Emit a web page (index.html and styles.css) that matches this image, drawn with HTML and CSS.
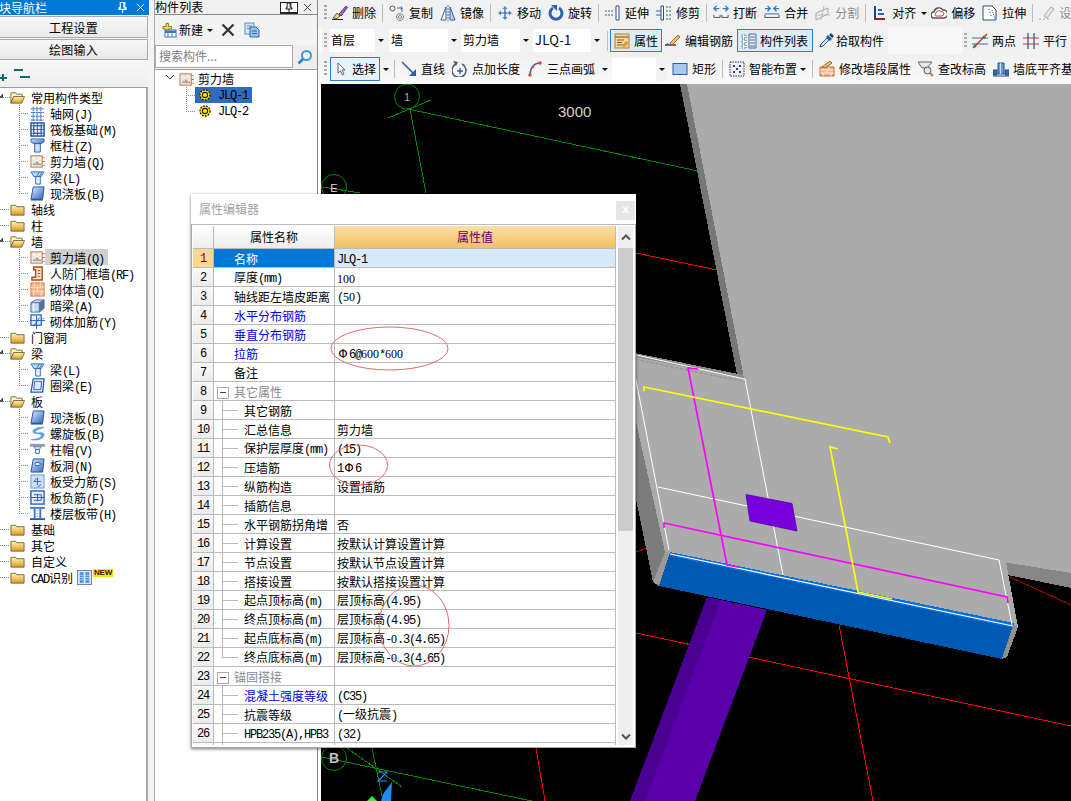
FILE: index.html
```html
<!DOCTYPE html>
<html lang="zh">
<head>
<meta charset="utf-8">
<title>属性编辑器</title>
<link rel="stylesheet" href="styles.css">
</head>
<body>
<svg class="defs" width="0" height="0">
<defs>
<linearGradient id="fy" x1="0" y1="0" x2="0" y2="1"><stop offset="0" stop-color="#fff4b8"/><stop offset="1" stop-color="#d99a1e"/></linearGradient>
<linearGradient id="bl" x1="0" y1="0" x2="1" y2="1"><stop offset="0" stop-color="#dfeaff"/><stop offset="1" stop-color="#2f68c0"/></linearGradient>
<symbol id="pin" viewBox="0 0 10 12"><path d="M2.500 0h5v6.500H9V8H1V6.500h1.500z" fill="none" stroke="currentColor" stroke-width="1.300"/><path d="M5 8v4M6.500 0v6" stroke="currentColor" stroke-width="1.300"/></symbol>
<symbol id="cls" viewBox="0 0 10 10"><path d="M1 1l8 8M9 1L1 9" stroke="currentColor" stroke-width="1"/></symbol>
<symbol id="fc" viewBox="0 0 16 16"><path d="M1 3.500h5l1 1.500h8v9H1z" fill="url(#fy)" stroke="#7a6a3a"/></symbol>
<symbol id="fo" viewBox="0 0 16 16"><path d="M1 3h5l1 1.500h6V7H4L1 14z" fill="#fff3c8" stroke="#7a6a3a"/><path d="M1 14l3-7h11.500l-3 7z" fill="url(#fy)" stroke="#7a6a3a"/></symbol>
<symbol id="grid" viewBox="0 0 16 16"><path d="M1 3h14M1 7h14M1 11h14M1 15h14M3.500 1v15M7.500 1v15M11.500 1v15" stroke="#2a5fb0" fill="none" stroke-dasharray="2 .6"/></symbol>
<symbol id="raft" viewBox="0 0 16 16"><rect x="1" y="1" width="14" height="14" fill="#e8eefc" stroke="#1e4f9c" stroke-width="1.500"/><path d="M4 4h8v8H4zM1 4h14M1 12h14M4 1v14M12 1v14M8 1v14M1 8h14" stroke="#1e4f9c" fill="none" stroke-width=".8"/></symbol>
<symbol id="col" viewBox="0 0 16 16"><path d="M1 1h14v3l-3 2H4L1 4z" fill="url(#bl)" stroke="#2c5ea8"/><path d="M5 6h6v9H5z" fill="#cfe0fa" stroke="#2c5ea8"/></symbol>
<symbol id="wall" viewBox="0 0 16 16"><rect x="1" y="2" width="12" height="12" fill="#f2f0ea" stroke="#c66b2e"/><path d="M3 12h9v-2H9V8H6v2H3z" fill="#a8a49c"/><path d="M4 9h1M7 6h1M10 7h1M3 7h1M6 4h1" stroke="#bbb"/><path d="M13 4h3M13 8h3M13 12h3" stroke="#d9782e"/></symbol>
<symbol id="beam" viewBox="0 0 16 16"><path d="M1 2h14l-3 5H4z" fill="#bcd6f6" stroke="#2c6cc0"/><path d="M6 7h5v8H6z" fill="#e5f0fd" stroke="#2c6cc0"/><path d="M10 2l-3 5M13 2l-3 5" stroke="#2c6cc0"/></symbol>
<symbol id="slab" viewBox="0 0 16 16"><path d="M3.500 1H15l-1.500 13H1z" fill="url(#bl)" stroke="#1e4f9c"/><path d="M1 14h12.500v1.500H1z" fill="#1e4f9c"/></symbol>
<symbol id="door" viewBox="0 0 16 16"><path d="M4 1h9v14H2v-3h4V4H4z" fill="#fbe3cf" stroke="#a8501e" stroke-width="1.500"/><path d="M8 5h3M8 8h3M8 11h3" stroke="#a8501e"/></symbol>
<symbol id="brick" viewBox="0 0 16 16"><rect x="1" y="1" width="14" height="14" fill="#f6b48a" stroke="#d9763a"/><path d="M1 5.500h14M1 10h14M5 1v4.500M11 1v4.500M8 5.500V10M4 10v5M12 10v5" stroke="#fbe6d6"/></symbol>
<symbol id="dbeam" viewBox="0 0 16 16"><path d="M1 5l5-3h9v9l-5 4H1z" fill="#c6d9f0" stroke="#3a6aa8"/><path d="M1 5h9v10M10 5l5-3" fill="none" stroke="#3a6aa8"/><path d="M10 5l5-3v9l-5 4z" fill="#55729c"/><path d="M4 5v10" stroke="#fff"/></symbol>
<symbol id="mrebar" viewBox="0 0 16 16"><rect x="1" y="1" width="11" height="11" fill="#e5efff" stroke="#1f5fc0" stroke-width="1.300"/><path d="M0 7h16M7 2v14M4 13l6-9" stroke="#1f5fc0" fill="none"/><path d="M12 5h4" stroke="#1f5fc0" stroke-dasharray="1 1"/></symbol>
<symbol id="ring" viewBox="0 0 16 16"><path d="M3.500 1H15l-1.500 14H1z" fill="#fff" stroke="#2058b0" stroke-width="1.400"/><path d="M5 3.500h7.500l-1 9H4z" fill="#dbe8fb" stroke="#2058b0"/></symbol>
<symbol id="spiral" viewBox="0 0 16 16"><path d="M15 1.500C9 1 3 3 3 6s9 1 9 4-5 4-11 4.500C6 16 15 14 15 9.500S6 9 6 6.500 10 3 15 1.500z" fill="#5aa9ee" stroke="#3a8ad8" stroke-width=".6"/></symbol>
<symbol id="cap" viewBox="0 0 16 16"><path d="M0 2h16v3H0z" fill="#9a9a9a"/><path d="M4 5h8l-2 3H6z" fill="#cde0f8" stroke="#2c6cc0" stroke-width=".7"/><path d="M6 8h4v4H6z" fill="#fff" stroke="#2c6cc0"/></symbol>
<symbol id="hole" viewBox="0 0 16 16"><path d="M3.500 1H15l-1.500 14H1z" fill="url(#bl)" stroke="#1e4f9c"/><ellipse cx="8" cy="6.500" rx="3" ry="1.800" fill="#fff" stroke="#1e4f9c"/></symbol>
<symbol id="srebar" viewBox="0 0 16 16"><rect x="1" y="1" width="14" height="14" fill="#cfe0fa" stroke="#6a92d8"/><path d="M4 8h8M8 4v8M4 8l4-4M12 11l-4 3" stroke="#2f66c8" fill="none"/></symbol>
<symbol id="nrebar" viewBox="0 0 16 16"><rect x="1" y="1" width="14" height="14" fill="#e8f0fe" stroke="#2058b0" stroke-width="1.400"/><path d="M1 8h14M8 4v8M4 5h8v6H4" stroke="#2058b0" fill="none"/></symbol>
<symbol id="band" viewBox="0 0 16 16"><path d="M0 1h16v2H0z" fill="#3f78c8"/><path d="M4 3h2v10H4zM10 3h2v10h-2z" fill="#3f78c8"/><path d="M0 13h16v2H0z" fill="#2058b0"/><path d="M7 5h2M7 8h2M7 11h2" stroke="#9ab"/></symbol>
<symbol id="cad" viewBox="0 0 16 16"><rect x=".5" y=".5" width="15" height="15" fill="#d9e8fb" stroke="#6a7f9c"/><path d="M3 2.500h4v11H3zM9 2.500h4v11H9z" fill="#3a8ae0"/><path d="M3 5.500h4M3 8h4M3 10.500h4M9 5.500h4M9 8h4M9 10.500h4" stroke="#fff" stroke-width=".7"/></symbol>
<symbol id="gear" viewBox="0 0 12 12"><circle cx="6" cy="6" r="5.300" fill="#ffe800"/><circle cx="6" cy="6" r="5" fill="none" stroke="#111" stroke-width="1.400" stroke-dasharray="1.700 1.300"/><circle cx="6" cy="6" r="2.600" fill="#ffe800" stroke="#222" stroke-width="1.100"/></symbol>
<symbol id="new" viewBox="0 0 18 16"><path d="M7 1.500h2.500v3h3v2.500h-3v3H7V7H4V4.500h3z" fill="#f7d94c" stroke="#9a7d1e"/><rect x="6" y="8" width="11" height="7" fill="#fff" stroke="#3b78c0"/><path d="M6 8.500h11V11H6z" fill="#3b78c0"/><path d="M9 11v4M13 11v4" stroke="#3b78c0"/></symbol>
<symbol id="xx" viewBox="0 0 14 14"><path d="M1.500 1.500l11 11M12.500 1.500l-11 11" stroke="#333" stroke-width="2.200"/></symbol>
<symbol id="cp" viewBox="0 0 16 16"><rect x="1" y="1" width="9" height="11" fill="#d5e5f8" stroke="#5f8ec6"/><path d="M3 4h5M3 6.500h5" stroke="#5f8ec6"/><path d="M6 5h6l3 3v7H6z" fill="#9ec3ea" stroke="#2f6aa8"/><path d="M8 9h5M8 11.500h5" stroke="#2f6aa8"/></symbol>
<symbol id="srch" viewBox="0 0 16 16"><circle cx="9.500" cy="6.500" r="4.500" fill="#eaf5ff" stroke="#3f97e0" stroke-width="2"/><path d="M6 10l-4.500 4.500" stroke="#2f80d0" stroke-width="2.500"/></symbol>
<symbol id="del" viewBox="0 0 16 16"><path d="M0 14.500h11" stroke="#222"/><path d="M1 13l4-5 3 3-3 2.500z" fill="#f3cf8a" stroke="#6a5a2a"/><path d="M7 9l7-8 1.500 1.500L9 11z" fill="#9a62c8" stroke="#5a3a8a"/></symbol>
<symbol id="copy" viewBox="0 0 16 16"><circle cx="3.500" cy="3.500" r="2.500" fill="#fff" stroke="#555"/><circle cx="11" cy="12" r="3.500" fill="#fff" stroke="#777"/><circle cx="11" cy="12" r="1.500" fill="none" stroke="#777"/><path d="M8 3h5l-1-1.500M13 3l-1 1.500M13 3v4" stroke="#3a6aa8" fill="none"/></symbol>
<symbol id="mirror" viewBox="0 0 16 16"><path d="M8 0v16" stroke="#3a5f98" stroke-dasharray="2 1"/><path d="M6 2L1 15h5z" fill="#fff" stroke="#2f5f9c"/><path d="M10 2l5 13h-5z" fill="#bcd3f0" stroke="#2f5f9c"/></symbol>
<symbol id="move" viewBox="0 0 16 16"><path d="M8 2v12M2 8h12" stroke="#2a5f98" stroke-width="1.200"/><path d="M8 1l2.500 3h-5zM8 15l2.500-3h-5zM1 8l3-2.500v5zM15 8l-3-2.500v5z" fill="#4a86c8"/></symbol>
<symbol id="rot" viewBox="0 0 16 16"><path d="M5 3a6 6 0 1 0 6 0" fill="none" stroke="#2a62b8" stroke-width="3"/><path d="M3 0h6v6z" fill="#2a62b8"/></symbol>
<symbol id="ext" viewBox="0 0 16 16"><path d="M0 6h9M0 10h9" stroke="#3a5f90" stroke-dasharray="2 1"/><path d="M11 1h3v14h-3z" fill="#fff" stroke="#1f4f90"/></symbol>
<symbol id="trim" viewBox="0 0 16 16"><path d="M0 6h6M0 10h6" stroke="#3a5f90"/><path d="M5 1h2.500v14H5z" fill="#fff" stroke="#1f4f90"/><path d="M11 1v14M14 1v14" stroke="#3a5f90" stroke-dasharray="2 2"/></symbol>
<symbol id="brk" viewBox="0 0 18 16"><path d="M1 3h6M4 0L1 3l3 3M11 3h6M14 0l3 3-3 3" fill="none" stroke="#2f7ac8" stroke-width="1.500"/><path d="M1 10v3h7v-3M10 10v3h7v-3" fill="none" stroke="#444"/></symbol>
<symbol id="mrg" viewBox="0 0 18 16"><path d="M1 3h6M4 0l3 3-3 3M11 3h6M14 0l-3 3 3 3" fill="none" stroke="#2f7ac8" stroke-width="1.500"/><path d="M1 10v3h16v-3" fill="none" stroke="#444"/><path d="M1 9h16" stroke="#2f5a98"/></symbol>
<symbol id="spl" viewBox="0 0 16 16"><path d="M1 8l12-5v6L1 15z" fill="#eee" stroke="#aaa"/><path d="M1 10h14M9 1l-3 14" stroke="#bbb"/></symbol>
<symbol id="alg" viewBox="0 0 16 16"><path d="M3 15V1" stroke="#1f3f98" stroke-width="2"/><path d="M3 14h10" stroke="#b01f1f" stroke-width="2"/><path d="M6 9h6M6 5h4" stroke="#2a62b8" stroke-width="2"/></symbol>
<symbol id="off" viewBox="0 0 16 16"><path d="M3 13a3 3 0 0 1 0-6 5 5 0 0 1 9-2 4 4 0 0 1 1 8z" fill="#fff" stroke="#555" stroke-width="1.400"/><path d="M5 11a2 2 0 0 1 0-3 3 3 0 0 1 5-1.500 2 2 0 0 1 1 4.500z" fill="none" stroke="#d23a3a"/></symbol>
<symbol id="str" viewBox="0 0 16 16"><path d="M1 1h9l4 4v10H1z" fill="#fff" stroke="#2a4f80"/><path d="M10 5l3 9M7 4v1M8 7v1M9 10v1" stroke="#2a4f80" stroke-dasharray="1 1"/></symbol>
<symbol id="set" viewBox="0 0 16 16"><path d="M0 14h2M4 14h2M8 14h2" stroke="#aaa"/><path d="M5 11l7-9 3 2-7 9z" fill="#e8e8e8" stroke="#aaa"/></symbol>
<symbol id="prop" viewBox="0 0 16 16"><rect x="1" y="1" width="14" height="14" fill="#f7d9a8" stroke="#b27a2a"/><path d="M1 4h14" stroke="#b27a2a" stroke-width="1.500"/><path d="M3 7h7M3 9.500h5M3 12h8" stroke="#7a5a1a"/><path d="M7 13l5-5 3 2-4 4z" fill="#d8a040"/></symbol>
<symbol id="ebar" viewBox="0 0 16 16"><path d="M0 12h11" stroke="#333" stroke-width="1.400"/><path d="M3 10l-3 2 4 0z" fill="#555"/><path d="M5 10l8-8 2 2-8 8z" fill="#f3c070" stroke="#a06a2a"/></symbol>
<symbol id="lst" viewBox="0 0 16 16"><path d="M1 2h4v3H1zM1 7h4v3H1zM1 12h4v3H1z" fill="#fff" stroke="#555" stroke-dasharray="1 1"/><path d="M8 1h7v14H8z" fill="#e5eefa" stroke="#4a6a98"/><path d="M9 4h5M9 7h5M9 10h5M9 13h5" stroke="#4a6a98"/></symbol>
<symbol id="pick" viewBox="0 0 16 16"><path d="M10 2l4 4-2 2-4-4z" fill="#1f5fb0"/><path d="M9 5l2 2-6 6-3 1 1-3z" fill="#cfe4fa" stroke="#2a5f98"/><path d="M12 1l3 3" stroke="#173f78" stroke-width="2.500"/></symbol>
<symbol id="two" viewBox="0 0 16 16"><path d="M0 5h16M0 11h16" stroke="#3a6aa8"/><path d="M1 15L15 1" stroke="#c22" stroke-width="1.300"/><circle cx="3" cy="13" r="1.500" fill="#2a8a2a"/><circle cx="12" cy="4" r="1.500" fill="#2a8a2a"/></symbol>
<symbol id="par" viewBox="0 0 16 16"><path d="M0 5h16M0 11h16" stroke="#c23a3a" stroke-width="1.200"/><path d="M5 0v16M11 0v16" stroke="#2f4f98" stroke-width="1.200"/></symbol>
<symbol id="sel" viewBox="0 0 16 16"><path d="M5 2v10l2.500-2 2 4 1.500-1-2-4h3z" fill="#fff" stroke="#666"/></symbol>
<symbol id="ln" viewBox="0 0 16 16"><path d="M1 1l12 12" stroke="#2a5fa8" stroke-width="1.600"/><path d="M15 15H8l7-7z" fill="#2a5fa8"/></symbol>
<symbol id="ptl" viewBox="0 0 16 16"><path d="M4 3a7 7 0 1 0 6 0" fill="none" stroke="#4a5a70" stroke-width="1.500"/><path d="M1 0l5 1-2 4z" fill="#4a5a70"/><path d="M8 7v6M5 10h6" stroke="#2a5fa8" stroke-width="1.300"/></symbol>
<symbol id="arc" viewBox="0 0 16 16"><path d="M3 14C3 7 7 2 13 2" fill="none" stroke="#2a5fa8" stroke-width="1.400"/><circle cx="3" cy="14" r="1.800" fill="#d2503a"/><circle cx="13" cy="2" r="1.800" fill="#d2503a"/><circle cx="6" cy="6" r="1.400" fill="#d2503a"/></symbol>
<symbol id="rct" viewBox="0 0 16 16"><rect x="1" y="2.500" width="14" height="11" fill="#a9c8f2" stroke="#2f5fa8"/></symbol>
<symbol id="smt" viewBox="0 0 16 16"><rect x="1" y="1" width="14" height="14" fill="#eef" stroke="#333" stroke-dasharray="1.500 1"/><path d="M4 4h2v2H4zM10 4h2v2h-2zM4 10h2v2H4zM10 10h2v2h-2zM7 7h2v2H7z" fill="#444"/></symbol>
<symbol id="mdf" viewBox="0 0 16 16"><path d="M1 6h14v9H1z" fill="#f6b48a" stroke="#c26a32"/><path d="M1 9h14M1 12h14M5 6v3M10 6v3M8 9v3M4 12v3M12 12v3" stroke="#fbe6d6"/><path d="M3 6l8-6 2 2-7 5z" fill="#e9c26a" stroke="#8a6a2a"/></symbol>
<symbol id="elv" viewBox="0 0 16 16"><path d="M0 1h14l-5 6H4z" fill="#e6eaf0" stroke="#667"/><circle cx="9.500" cy="9.500" r="3.500" fill="#d8e8f8" stroke="#555"/><path d="M12 12l3 3" stroke="#b8842a" stroke-width="2.200"/></symbol>
<symbol id="flr" viewBox="0 0 16 16"><path d="M5 2h6v11H5z" fill="#6a9ad8" stroke="#1f4f90"/><path d="M7.500 2v11" stroke="#cfe0f5"/><path d="M0 9h4v5H0zM12 9h4v5h-4z" fill="#3a6ab0" stroke="#1f4f90"/><path d="M0 15h16" stroke="#1f3f78"/></symbol>
</defs>
</svg>

<div class="app">
  <aside class="nav">
    <div class="title title-blue"><span class="title-text">块导航栏</span><svg class="tpin"><use href="#pin"/></svg><svg class="tcls"><use href="#cls"/></svg></div>
    <div class="navbtn">工程设置</div>
    <div class="navbtn navbtn-2">绘图输入</div>
    <div class="navtools"><span class="plus"></span><span class="minus"></span></div>
    <div class="tree">
      <div class="n1 open"><svg class="ti"><use href="#fo"/></svg>常用构件类型</div>
      <div class="n2"><svg class="ti"><use href="#grid"/></svg><span class="tx">轴网<span class="m">(J)</span></span></div>
      <div class="n2"><svg class="ti"><use href="#raft"/></svg><span class="tx">筏板基础<span class="m">(M)</span></span></div>
      <div class="n2"><svg class="ti"><use href="#col"/></svg><span class="tx">框柱<span class="m">(Z)</span></span></div>
      <div class="n2"><svg class="ti"><use href="#wall"/></svg><span class="tx">剪力墙<span class="m">(Q)</span></span></div>
      <div class="n2"><svg class="ti"><use href="#beam"/></svg><span class="tx">梁<span class="m">(L)</span></span></div>
      <div class="n2 last"><svg class="ti"><use href="#slab"/></svg><span class="tx">现浇板<span class="m">(B)</span></span></div>
      <div class="n1"><svg class="ti"><use href="#fc"/></svg>轴线</div>
      <div class="n1"><svg class="ti"><use href="#fc"/></svg>柱</div>
      <div class="n1 open"><svg class="ti"><use href="#fo"/></svg>墙</div>
      <div class="n2"><svg class="ti"><use href="#wall"/></svg><span class="tx on">剪力墙<span class="m">(Q)</span></span></div>
      <div class="n2"><svg class="ti"><use href="#door"/></svg><span class="tx">人防门框墙<span class="m">(RF)</span></span></div>
      <div class="n2"><svg class="ti"><use href="#brick"/></svg><span class="tx">砌体墙<span class="m">(Q)</span></span></div>
      <div class="n2"><svg class="ti"><use href="#dbeam"/></svg><span class="tx">暗梁<span class="m">(A)</span></span></div>
      <div class="n2 last"><svg class="ti"><use href="#mrebar"/></svg><span class="tx">砌体加筋<span class="m">(Y)</span></span></div>
      <div class="n1"><svg class="ti"><use href="#fc"/></svg>门窗洞</div>
      <div class="n1 open"><svg class="ti"><use href="#fo"/></svg>梁</div>
      <div class="n2"><svg class="ti"><use href="#beam"/></svg><span class="tx">梁<span class="m">(L)</span></span></div>
      <div class="n2 last"><svg class="ti"><use href="#ring"/></svg><span class="tx">圈梁<span class="m">(E)</span></span></div>
      <div class="n1 open"><svg class="ti"><use href="#fo"/></svg>板</div>
      <div class="n2"><svg class="ti"><use href="#slab"/></svg><span class="tx">现浇板<span class="m">(B)</span></span></div>
      <div class="n2"><svg class="ti"><use href="#spiral"/></svg><span class="tx">螺旋板<span class="m">(B)</span></span></div>
      <div class="n2"><svg class="ti"><use href="#cap"/></svg><span class="tx">柱帽<span class="m">(V)</span></span></div>
      <div class="n2"><svg class="ti"><use href="#hole"/></svg><span class="tx">板洞<span class="m">(N)</span></span></div>
      <div class="n2"><svg class="ti"><use href="#srebar"/></svg><span class="tx">板受力筋<span class="m">(S)</span></span></div>
      <div class="n2"><svg class="ti"><use href="#nrebar"/></svg><span class="tx">板负筋<span class="m">(F)</span></span></div>
      <div class="n2 last"><svg class="ti"><use href="#band"/></svg><span class="tx">楼层板带<span class="m">(H)</span></span></div>
      <div class="n1"><svg class="ti"><use href="#fc"/></svg>基础</div>
      <div class="n1"><svg class="ti"><use href="#fc"/></svg>其它</div>
      <div class="n1"><svg class="ti"><use href="#fc"/></svg>自定义</div>
      <div class="n1"><svg class="ti"><use href="#fc"/></svg><span class="cadlabel"><span class="m">CAD</span>识别</span><svg class="cad"><use href="#cad"/></svg><span class="newtag">NEW</span></div>
    </div>
  </aside>

  <aside class="list">
    <div class="title title-grey"><span class="title-text-2">构件列表</span><span class="pinbox"><svg class="tpin-b"><use href="#pin"/></svg></span><svg class="tcls-g"><use href="#cls"/></svg></div>
    <div class="listtools">
      <svg class="i18"><use href="#new"/></svg><span class="newlabel">新建</span><span class="arr"></span>
      <svg class="i14"><use href="#xx"/></svg>
      <svg class="i"><use href="#cp"/></svg>
    </div>
    <div class="searchrow"><div class="search">搜索构件...</div><div class="searchbtn"><svg class="i"><use href="#srch"/></svg></div></div>
    <div class="ltree">
      <div class="lroot"><span class="chev"></span><svg class="ti"><use href="#wall"/></svg>剪力墙</div>
      <div class="litem"><span class="lsel"><svg class="gear"><use href="#gear"/></svg><span class="ll">JLQ-1</span></span></div>
      <div class="litem last"><span class="lun"><svg class="gear"><use href="#gear"/></svg><span class="ll">JLQ-2</span></span></div>
    </div>
  </aside>

  <main class="main">
    <div class="row row1">
      <span class="grip"></span>
      <span class="tool"><svg class="i"><use href="#del"/></svg>删除</span><span class="sep"></span>
      <span class="tool"><svg class="i"><use href="#copy"/></svg>复制</span>
      <span class="tool"><svg class="i"><use href="#mirror"/></svg>镜像</span><span class="sep"></span>
      <span class="tool"><svg class="i"><use href="#move"/></svg>移动</span>
      <span class="tool"><svg class="i"><use href="#rot"/></svg>旋转</span><span class="sep"></span>
      <span class="tool"><svg class="i"><use href="#ext"/></svg>延伸</span>
      <span class="tool"><svg class="i"><use href="#trim"/></svg>修剪</span><span class="sep"></span>
      <span class="tool"><svg class="i"><use href="#brk"/></svg>打断</span>
      <span class="tool"><svg class="i"><use href="#mrg"/></svg>合并</span>
      <span class="tool off"><svg class="i"><use href="#spl"/></svg>分割</span><span class="sep"></span>
      <span class="tool t-arr"><svg class="i"><use href="#alg"/></svg>对齐<span class="arr"></span></span>
      <span class="tool"><svg class="i"><use href="#off"/></svg>偏移</span>
      <span class="tool"><svg class="i"><use href="#str"/></svg>拉伸</span><span class="sep"></span>
      <span class="tool off"><svg class="i"><use href="#set"/></svg>设</span>
    </div>
    <div class="row row2">
      <div class="band band-l">
        <span class="grip"></span>
        <span class="sel w57"><span class="val">首层</span><span class="drop"><span class="arr"></span></span></span>
        <span class="sel w70"><span class="val">墙</span><span class="drop"><span class="arr"></span></span></span>
        <span class="sel w70"><span class="val">剪力墙</span><span class="drop"><span class="arr"></span></span></span>
        <span class="sel w69"><span class="val val-l">JLQ-1</span><span class="drop"><span class="arr"></span></span></span>
        <span class="sep sep-b"></span>
        <span class="tool btn"><svg class="i"><use href="#prop"/></svg>属性</span>
        <span class="tool nomr"><svg class="i"><use href="#ebar"/></svg>编辑钢筋</span>
        <span class="tool btn b2"><svg class="i"><use href="#lst"/></svg>构件列表</span>
        <span class="tool g2"><svg class="i"><use href="#pick"/></svg>拾取构件</span>
      </div>
      <div class="band band-r">
        <span class="grip"></span>
        <span class="tool"><svg class="i"><use href="#two"/></svg>两点</span>
        <span class="tool"><svg class="i"><use href="#par"/></svg>平行</span>
      </div>
    </div>
    <div class="row row3">
      <span class="grip"></span>
      <span class="tool btn b3"><svg class="i"><use href="#sel"/></svg>选择</span><span class="arr a3"></span><span class="sep s3"></span>
      <span class="tool"><svg class="i"><use href="#ln"/></svg>直线</span>
      <span class="tool"><svg class="i"><use href="#ptl"/></svg>点加长度</span>
      <span class="tool t4"><svg class="i"><use href="#arc"/></svg>三点画弧<span class="arr a4"></span></span>
      <span class="sel w55"><span class="val"></span><span class="drop"><span class="arr"></span></span></span>
      <span class="tool"><svg class="i"><use href="#rct"/></svg>矩形</span><span class="sep"></span>
      <span class="tool"><svg class="i"><use href="#smt"/></svg>智能布置<span class="arr a5"></span></span><span class="sep"></span>
      <span class="tool"><svg class="i"><use href="#mdf"/></svg>修改墙段属性</span>
      <span class="tool"><svg class="i"><use href="#elv"/></svg>查改标高</span>
      <span class="tool"><svg class="i"><use href="#flr"/></svg>墙底平齐基</span>
    </div>
    <div class="view">
      <svg class="scene" viewBox="321 84 750 717" preserveAspectRatio="none">
        <g shape-rendering="crispEdges" fill="none" stroke-width="1">
          <path d="M636 633L1071 726" stroke="#ff0000"/>
          <path d="M839 625L873 801" stroke="#ff0000"/>
          <path d="M636 253L717 270" stroke="#ff0000"/>
          <path d="M636 552L650 547" stroke="#c00000"/>
          <path d="M1010 577L1071 605" stroke="#a00000"/>
          <path d="M536 748L545 801" stroke="#ff0000"/>
          <path d="M388 118L431 100M408 109L698 171M410 109L426 193" stroke="#008a00"/>
          <path d="M323 187L360 193" stroke="#008a00"/>
          <path d="M322 757L532 801M347 748L402 787M372 748L383 801" stroke="#008a00"/>
        </g>
        <circle cx="407" cy="96.500" r="12.500" fill="none" stroke="#008a00"/>
        <circle cx="334" cy="187" r="12.500" fill="none" stroke="#008a00"/>
        <circle cx="334" cy="758" r="12.500" fill="none" stroke="#008a00"/>
        <text x="407" y="101" class="lab lab-dim">1</text>
        <text x="334" y="192" class="lab">E</text>
        <text x="334" y="763" class="lab lab-b">B</text>
        <text x="558" y="117" class="dim">3000</text>
        <path d="M378 772h9l-9 9h9" fill="none" stroke="#1e90ff" stroke-width="1.200"/>
        <path d="M392 782l-9 12-2 7h10z" fill="#1e8cf0"/>
        <path d="M372 796l5 5h-10z" fill="#22ff22"/>

        <g shape-rendering="crispEdges">
          <path d="M707 597L767 610L695 801H630z" fill="#5a00aa"/>
          <path d="M707 597L721 600L645 801H630z" fill="#4a0090"/>
          <path d="M680 84H687L744 378L737 375z" fill="#777777"/>
          <path d="M687 84H1071V573L1006 562.500L744 378z" fill="#ababab"/>
          <path d="M1006 562.500L1071 573V588L1008 575z" fill="#868686"/>
          <path d="M630 352L743 375L900 440L1006 562L1018 627L1013 624L670 553L665 552L630 410z" fill="#ababab"/>
          <path d="M630 395L665 552L653 582L630 470z" fill="#7c7c7c"/>
          <path d="M665 552L670 553L659 586L653 582z" fill="#9a9a9a"/>
          <path d="M630 352L743 375L745 379L630 356z" fill="#8c8c8c"/>
          <path d="M1013 624L1018 627L1007 657L1002 659z" fill="#909090"/>
          <path d="M670 552L1014 623L1002 659L659 586z" fill="#005ab4"/>
          <path d="M670 552L1014 623L1013 628L670 556z" fill="#006fe0"/>
        </g>
        <g fill="none" stroke-linejoin="miter">
          <path d="M636 359.500L745 382" stroke="#8a8a8a" stroke-dasharray="3 2"/>
          <path d="M636 355L745 379L783 575M636 380L669 550M658 487L999 560L1012 625" stroke="#ffffff"/>
          <path d="M670 554L1013 626" stroke="#ffffff" stroke-width="1.200"/>
          <path d="M698 369L688 368L727 565L738 567M664 528V523L1007 597L1008 603" stroke="#ff00ff" stroke-width="1.700"/>
          <path d="M644 391V387L888 437L890 443M838 449L830 447L858 592L892 599" stroke="#ffff00" stroke-width="1.700"/>
        </g>
        <path d="M746 494.500L792 503.500L797 531L750 521z" fill="#7700dd" stroke="#5a00aa" stroke-width=".8"/>
      </svg>
    </div>
  </main>

  <section class="dialog">
    <header class="dtitle"><span>属性编辑器</span><span class="dclose">x</span></header>
    <div class="dbody">
      <div class="gridwrap">
        <table class="pt">
          <colgroup><col class="c0"><col class="c1"><col class="c2"></colgroup>
          <thead><tr><th class="hn"></th><th class="hn">属性名称</th><th class="hv">属性值</th></tr></thead>
          <tbody>
            <tr class="cur"><td class="no">1</td><td class="nm">名称</td><td class="v"><span class="m">JLQ-1</span></td></tr>
            <tr><td class="no">2</td><td class="nm">厚度<span class="m">(mm)</span></td><td class="v"><span class="d">100</span></td></tr>
            <tr><td class="no">3</td><td class="nm">轴线距左墙皮距离</td><td class="v"><span class="m">(</span><span class="d">50</span><span class="m">)</span></td></tr>
            <tr><td class="no">4</td><td class="nm lk">水平分布钢筋</td><td class="v"></td></tr>
            <tr><td class="no">5</td><td class="nm lk">垂直分布钢筋</td><td class="v"></td></tr>
            <tr><td class="no">6</td><td class="nm lk">拉筋</td><td class="v"><span class="rb">Φ</span><span class="m">6@</span><span class="d">600</span><span class="m">*</span><span class="d">600</span></td></tr>
            <tr><td class="no">7</td><td class="nm">备注</td><td class="v"></td></tr>
            <tr><td class="no">8</td><td class="nm gh"><span class="box"></span>其它属性</td><td class="v"></td></tr>
            <tr><td class="no">9</td><td class="nm ch">其它钢筋</td><td class="v"></td></tr>
            <tr><td class="no">10</td><td class="nm ch">汇总信息</td><td class="v">剪力墙</td></tr>
            <tr><td class="no">11</td><td class="nm ch">保护层厚度<span class="m">(mm)</span></td><td class="v"><span class="m">(15)</span></td></tr>
            <tr><td class="no">12</td><td class="nm ch">压墙筋</td><td class="v"><span class="m">1</span><span class="rb">Φ</span><span class="m">6</span></td></tr>
            <tr><td class="no">13</td><td class="nm ch">纵筋构造</td><td class="v">设置插筋</td></tr>
            <tr><td class="no">14</td><td class="nm ch">插筋信息</td><td class="v"></td></tr>
            <tr><td class="no">15</td><td class="nm ch">水平钢筋拐角增</td><td class="v">否</td></tr>
            <tr><td class="no">16</td><td class="nm ch">计算设置</td><td class="v">按默认计算设置计算</td></tr>
            <tr><td class="no">17</td><td class="nm ch">节点设置</td><td class="v">按默认节点设置计算</td></tr>
            <tr><td class="no">18</td><td class="nm ch">搭接设置</td><td class="v">按默认搭接设置计算</td></tr>
            <tr><td class="no">19</td><td class="nm ch">起点顶标高<span class="m">(m)</span></td><td class="v">层顶标高<span class="m">(4.95)</span></td></tr>
            <tr><td class="no">20</td><td class="nm ch">终点顶标高<span class="m">(m)</span></td><td class="v">层顶标高<span class="m">(4.95)</span></td></tr>
            <tr><td class="no">21</td><td class="nm ch">起点底标高<span class="m">(m)</span></td><td class="v">层顶标高<span class="m">-</span><span class="d">0</span><span class="m">.3(4.65)</span></td></tr>
            <tr><td class="no">22</td><td class="nm ch end">终点底标高<span class="m">(m)</span></td><td class="v">层顶标高<span class="m">-</span><span class="d">0</span><span class="m">.3(4.65)</span></td></tr>
            <tr><td class="no">23</td><td class="nm gh"><span class="box"></span>锚固搭接</td><td class="v"></td></tr>
            <tr><td class="no">24</td><td class="nm ch lk">混凝土强度等级</td><td class="v"><span class="m">(C35)</span></td></tr>
            <tr><td class="no">25</td><td class="nm ch">抗震等级</td><td class="v"><span class="m">(</span>一级抗震<span class="m">)</span></td></tr>
            <tr><td class="no">26</td><td class="nm ch"><span class="m">HPB235(A),HPB3</span></td><td class="v"><span class="m">(32)</span></td></tr>
            <tr><td class="no"></td><td class="nm ch"></td><td class="v"></td></tr>
          </tbody>
        </table>
      </div>
      <div class="sb">
        <div class="sbtn"><svg class="sarrow" viewBox="0 0 10 8"><path d="M1 6.500L5 2.500L9 6.500" fill="none" stroke="#555" stroke-width="2"/></svg></div>
        <div class="thumb"></div>
        <div class="strack"></div>
        <div class="sbtn sbtn-d"><svg class="sarrow" viewBox="0 0 10 8"><path d="M1 1.500L5 5.500L9 1.500" fill="none" stroke="#555" stroke-width="2"/></svg></div>
      </div>
    </div>
    <svg class="marks" viewBox="191 194 445 554">
      <ellipse cx="389.500" cy="348.500" rx="58.500" ry="21.500"/>
      <ellipse cx="358.500" cy="465" rx="29" ry="20"/>
      <ellipse cx="414" cy="625.500" rx="35" ry="40.500"/>
    </svg>
  </section>
</div>
</body>
</html>
```
FILE: styles.css
```css
* { box-sizing: border-box; }
html, body { margin: 0; padding: 0; background: #fff; }
body { width: 1071px; height: 801px; overflow: hidden; font: 12px/16px "Noto Sans CJK SC", "Noto Sans CJK JP", sans-serif; color: #000; }
.defs { display: block; height: 0; }
.app { position: relative; display: flex; width: 1071px; height: 801px; overflow: hidden; }

.m { font: 12px/12px "Liberation Mono", monospace; letter-spacing: -1.2px; }
.d { font: 12px/12px "Liberation Serif", serif; }

/* left navigation */
.nav { width: 155px; flex: none; display: flex; flex-direction: column; border-right: 1px solid #a8a8a8; background: #f4f4f4; }
.title { height: 15px; display: flex; align-items: center; line-height: 14px; flex: none; }
.title-blue { background: #0078d7; color: #fff; width: 149px; }
.title-text { margin-left: -1px; flex: 1; white-space: nowrap; }
.tpin { width: 9px; height: 11px; color: #fff; margin-right: 9px; flex: none; }
.tcls { width: 9px; height: 9px; color: #fff; margin-right: 4px; flex: none; }
.navbtn { width: 148px; height: 22px; margin-top: 1px; flex: none; text-align: center; line-height: 21px; letter-spacing: .2px; background: linear-gradient(#f8f8f8, #e9e9e9); border: 1px solid #aaa; border-left: 0; }
.navbtn-2 { height: 21px; line-height: 20px; }
.navtools { width: 148px; height: 27px; flex: none; display: flex; align-items: center; background: linear-gradient(#f8f8f8, #eeeeee); }
.plus { width: 7px; height: 7px; margin: 7px 7px 0 0; background: linear-gradient(#0b6b6b, #0b6b6b) 0 3px / 7px 2px no-repeat, linear-gradient(#0b6b6b, #0b6b6b) 2px 0 / 2px 7px no-repeat; }
.minus { width: 16px; height: 9px; background: linear-gradient(#0b6b6b, #0b6b6b) 0 0 / 9px 2px no-repeat, linear-gradient(#0b6b6b, #0b6b6b) 6px 7px / 10px 2px no-repeat; }
.tree { width: 148px; flex: 1; background: #fff; border-top: 1px solid #999; border-right: 2px solid #a8a8a8; padding-top: 1px; overflow: hidden; }
.ti { width: 15px; height: 15px; flex: none; }
.n1, .n2 { height: 16px; display: flex; align-items: center; white-space: nowrap; }
.n1 { padding: 2px 0 0 10px; gap: 6px; background: repeating-linear-gradient(to right, #888 0 1px, transparent 1px 2px) 0 8px / 10px 1px no-repeat; }
.n1 .ti { margin-top: -2px; }
.n1.open { background: repeating-linear-gradient(to right, #888 0 1px, transparent 1px 2px) 3px 8px / 7px 1px no-repeat, linear-gradient(135deg, transparent 50%, #555 50%) -1px 5px / 4px 4px no-repeat; }
.n2 { padding-left: 30px; background: repeating-linear-gradient(to right, #888 0 1px, transparent 1px 2px) 19px 8px / 10px 1px no-repeat, repeating-linear-gradient(to bottom, #888 0 1px, transparent 1px 2px) 19px 0 / 1px 16px no-repeat; }
.n2.last { background: repeating-linear-gradient(to right, #888 0 1px, transparent 1px 2px) 19px 8px / 10px 1px no-repeat, repeating-linear-gradient(to bottom, #888 0 1px, transparent 1px 2px) 19px 0 / 1px 8px no-repeat; }
.tx { padding: 0 4px 0 5px; height: 16px; line-height: 18px; }
.tx.on { background: #d0d0d0; }
.cadlabel { margin-right: -1px; }
.cad { width: 15px; height: 15px; margin: -2px 0 0 -1px; flex: none; }
.newtag { background: #ffe800; font: bold 8px/8px "Liberation Sans", sans-serif; height: 8px; padding: 0 1px; margin: -10px 0 0 -5px; letter-spacing: -.2px; color: #222; }

/* component list */
.list { width: 163px; flex: none; display: flex; flex-direction: column; background: #f6f6f6; border-right: 1px solid #888; }
.title-grey { background: #f0f0f0; border-bottom: 1px solid #888; }
.title-text-2 { flex: 1; letter-spacing: .1px; }
.pinbox { width: 18px; height: 12px; margin-top: 2px; border: 1px solid #222; border-bottom-width: 2px; display: flex; justify-content: center; background: #fff; }
.tpin-b { width: 8px; height: 9px; color: #111; }
.tcls-g { width: 9px; height: 9px; margin: 0 5px; color: #333; flex: none; }
.listtools { height: 30px; flex: none; display: flex; align-items: center; padding-left: 4px; background: #f3f3f3; }
.i18 { width: 18px; height: 16px; flex: none; }
.i14 { width: 14px; height: 14px; margin: 0 9px 0 8px; flex: none; }
.newlabel { margin-left: 2px; margin-right: 4px; }
.arr { display: inline-block; width: 0; height: 0; border: 3px solid transparent; border-top: 3px solid #111; border-bottom: 0; flex: none; }
.searchrow { height: 24px; flex: none; display: flex; }
.search { width: 138px; height: 23px; border: 1px solid #aaa; background: #fff; color: #808080; line-height: 20px; padding-left: 3px; }
.searchbtn { width: 24px; height: 23px; background: #eeeeee; display: flex; align-items: center; justify-content: center; }
.i { width: 16px; height: 16px; flex: none; }
.ltree { flex: 1; background: #fff; border-top: 1px solid #999; padding-top: 1px; }
.lroot { height: 16px; display: flex; align-items: center; padding-left: 11px; gap: 5px; }
.lroot .ti { margin-right: -1px; }
.chev { width: 8px; height: 8px; background: linear-gradient(45deg, transparent 46%, #444 46% 66%, transparent 66%) 0 0 / 4px 5px no-repeat, linear-gradient(-45deg, transparent 46%, #444 46% 66%, transparent 66%) 4px 0 / 4px 5px no-repeat; }
.litem { height: 16px; padding-left: 40px; display: flex; background: repeating-linear-gradient(to right, #888 0 1px, transparent 1px 2px) 31px 8px / 9px 1px no-repeat, repeating-linear-gradient(to bottom, #888 0 1px, transparent 1px 2px) 31px 0 / 1px 16px no-repeat; }
.litem.last { background: repeating-linear-gradient(to right, #888 0 1px, transparent 1px 2px) 31px 8px / 9px 1px no-repeat, repeating-linear-gradient(to bottom, #888 0 1px, transparent 1px 2px) 31px 0 / 1px 8px no-repeat; }
.lsel, .lun { display: flex; align-items: center; height: 16px; width: 57px; padding-left: 4px; }
.lsel { background: #2f6cc0; }
.gear { width: 12px; height: 12px; flex: none; }
.ll { margin-left: 7px; padding-top: 2px; font: 12px/16px "Liberation Mono", monospace; letter-spacing: -1.2px; }

/* main area */
.main { flex: 1; min-width: 0; display: flex; flex-direction: column; background: #f8f8f8; }
.row { flex: none; display: flex; align-items: center; white-space: nowrap; overflow: hidden; padding-left: 6px; }
.row1 { height: 27px; padding-bottom: 1px; background: #f1f1f1; }
.row2 { height: 27px; align-items: stretch; padding-left: 4px; }
.row3 { height: 30px; background: linear-gradient(#f0f0f0, #fafafa); padding-left: 6px; }
.grip { width: 3px; height: 16px; flex: none; margin-right: 5px; background: repeating-linear-gradient(to bottom, #aaa 0 2px, transparent 2px 4px); }
.row3 .grip { margin-right: 3px; }
.tool { display: flex; align-items: center; gap: 4px; margin-right: 7px; flex: none; }
.tool.off { color: #8f8f8f; }
.t-arr .arr { margin-left: 1px; }
.t-arr { margin-right: 4px; }
.sep { width: 1px; height: 18px; flex: none; background: #bdbdbd; margin: 0 6px 0 -1px; }
.band { display: flex; align-items: center; background: #f1f1f1; }
.band-l { width: 566px; padding-left: 2px; }
.band-l .grip { margin-right: 2px; }
.band-r { width: 109px; margin-left: 74px; padding-left: 2px; }
.sel { display: flex; align-items: stretch; height: 23px; background: #fff; margin-right: 3px; flex: none; }
.val { flex: 1; padding-left: 2px; line-height: 22px; }
.val-l { font-size: 13px; letter-spacing: .3px; }
.drop { width: 11px; background: #f2f2f2; display: flex; align-items: center; justify-content: center; }
.w57 { width: 57px; } .w70 { width: 70px; margin-right: 2px; } .w69 { width: 69px; } .w55 { width: 55px; margin-right: 5px; }
.sep-b { margin: 0 2px; height: 20px; }
.btn { background: #dcebf8; border: 1px solid #2f80c8; height: 23px; padding: 0 3px; margin-right: 3px; }
.nomr { margin-right: 4px; }
.b2 { margin-right: 5px; gap: 3px; padding-right: 4px; }
.g2 { gap: 2px; }
.b3 { height: 24px; width: 50px; margin-right: 3px; background: #e9f2fa; gap: 3px; padding: 0 2px; }
.a3 { margin-right: 5px; }
.s3 { margin: 0 6px 0 0; }
.t4 { margin-right: 4px; }
.a4 { margin-left: 3px; }
.a5 { margin-left: -1px; }
.view { flex: 1; min-height: 0; padding-left: 3px; background: #fff; }
.scene { display: block; width: 750px; height: 717px; background: #000; }
.lab { font: 11px "Liberation Sans", sans-serif; fill: #ddd; text-anchor: middle; }
.lab-dim { fill: #aaa; }
.lab-b { font: bold 14px "Liberation Sans", sans-serif; fill: #c4c4c4; }
.dim { font: 15px "Liberation Sans", sans-serif; fill: #d0d0d0; }

/* dialog */
.dialog { position: absolute; left: 191px; top: 194px; width: 445px; height: 554px; background: #fff; box-shadow: 0 1px 3px rgba(0, 0, 0, .55); display: flex; flex-direction: column; }
.dtitle { height: 30px; flex: none; display: flex; align-items: center; justify-content: space-between; padding: 0 1px 0 8px; color: #a4a4a4; }
.dclose { width: 19px; height: 19px; background: #e6e6e6; color: #fff; text-align: center; font: bold 11px/18px "DejaVu Sans", sans-serif; margin-top: 2px; }
.dbody { flex: 1; min-height: 0; display: flex; border: 1px solid #aaa; border-top-color: #bbb; padding: 1px 2px 2px 1px; }
.gridwrap { width: 423px; flex: none; overflow: hidden; }
.pt { table-layout: fixed; width: 423px; border-spacing: 0; border-collapse: separate; }
.c0 { width: 21px; } .c1 { width: 121px; } .c2 { width: 281px; }
.pt th { height: 23px; font-weight: normal; font-size: 12px; padding: 0; border-right: 1px solid #bbb; border-bottom: 1px solid #bbb; }
.hn { background: linear-gradient(#ffffff, #ececec); }
.hv { background: linear-gradient(#fcdfa6, #f2c062); color: #660066; }
.pt td { height: 19px; padding: 2px 0 0; border-right: 1px solid #bbb; border-bottom: 1px solid #bbb; white-space: nowrap; overflow: hidden; line-height: 12px; }
.pt .no { text-align: center; background: linear-gradient(#f8f8f8, #ececec); font: 12px/12px "Liberation Mono", monospace; letter-spacing: -1.2px; }
.pt .nm { padding-left: 20px; }
.pt .v { padding-left: 2px; }
.pt .lk { color: #0000ee; }
.pt .gh { padding-left: 3px; color: #8a8a8a; }
.box { display: inline-block; width: 12px; height: 12px; margin-right: 5px; vertical-align: -2px; border: 1px solid #aaa; background: linear-gradient(#444, #444) 2px 4px / 6px 1px no-repeat, #fff; }
.pt .ch { padding-left: 30px; background: linear-gradient(#bbb, #bbb) 8px 0 / 1px 100% no-repeat, linear-gradient(#bbb, #bbb) 9px 9px / 15px 1px no-repeat; }
.pt .ch.end { background: linear-gradient(#bbb, #bbb) 8px 0 / 1px 10px no-repeat, linear-gradient(#bbb, #bbb) 9px 9px / 15px 1px no-repeat; }
.rb { display: inline-block; width: 12px; text-align: center; font: 12px/12px "DejaVu Sans", sans-serif; }
.pt .cur .no { background: #fdd692; color: #660066; }
.pt .cur .nm { background: #0078d7; color: #fff; }
.pt .cur .v { background: #d8e9f8; }
.sb { width: 15px; margin-left: 2px; flex: none; display: flex; flex-direction: column; background: #efefef; }
.sbtn { height: 22px; flex: none; display: flex; align-items: center; justify-content: center; }
.sarrow { width: 10px; height: 8px; }
.thumb { height: 283px; flex: none; background: #cccccc; }
.strack { flex: 1; }
.sbtn-d { height: 17px; }
.marks { position: absolute; inset: 0; width: 445px; height: 554px; pointer-events: none; }
.marks ellipse { fill: none; stroke: #e66a6a; stroke-width: 1; }
```
